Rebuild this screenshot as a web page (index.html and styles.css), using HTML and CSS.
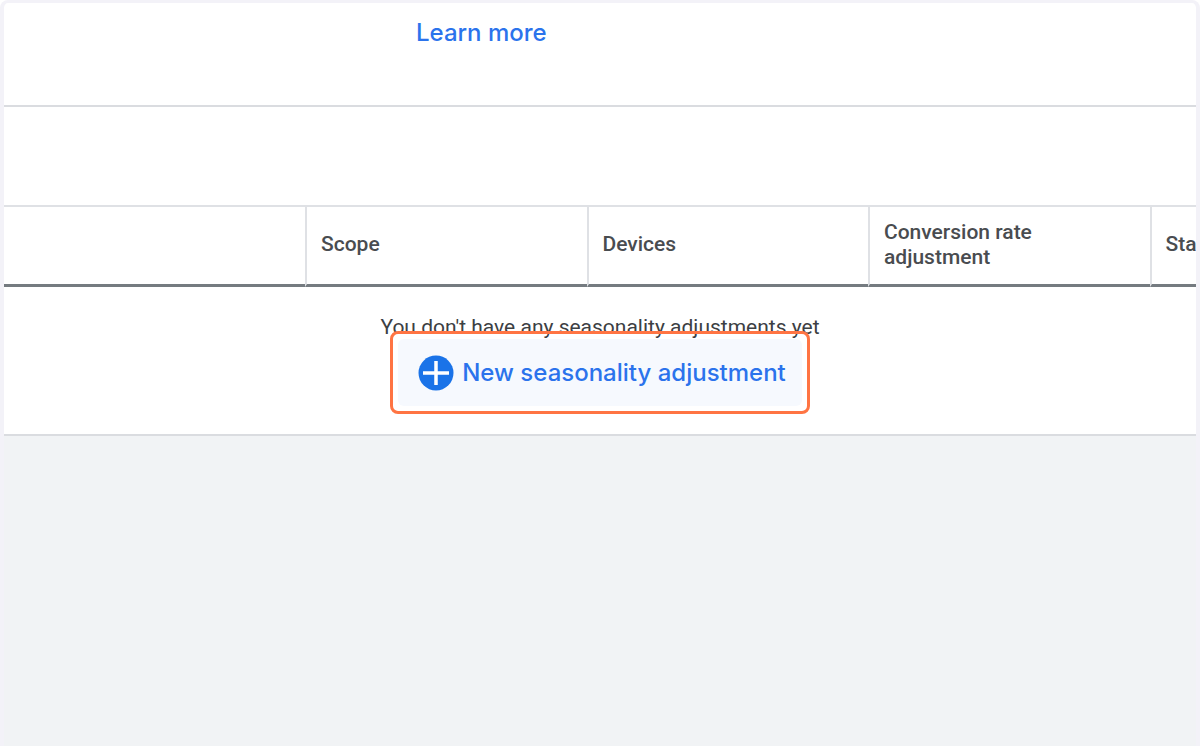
FILE: index.html
```
<!DOCTYPE html>
<html lang="en">
<head>
<meta charset="utf-8">
<meta name="viewport" content="width=device-width, initial-scale=1">
<title>Seasonality adjustments</title>
<link rel="stylesheet" href="styles.css">
</head>
<body>
<main class="frame">
  <header class="intro"><a class="learn-link" href="#">Learn more</a></header>
  <div class="toolbar"></div>
  <table class="grid">
    <thead>
      <tr>
        <td class="lead"></td>
        <th scope="col">Scope</th>
        <th scope="col">Devices</th>
        <th scope="col">Conversion rate adjustment</th>
        <th scope="col">Sta</th>
      </tr>
    </thead>
  </table>
  <section class="empty">
    <p class="empty-text">You don't have any seasonality adjustments yet</p>
    <div class="highlight">
      <button class="new-button" type="button">
        <svg class="plus" viewBox="0 0 36 36" aria-hidden="true"><circle cx="18" cy="18" r="17.5" fill="#1a73e8"/><path d="M18 6v24M5 18h26" stroke="#fff" stroke-width="3.5"/></svg>
        <span>New seasonality adjustment</span>
      </button>
    </div>
  </section>
</main>
</body>
</html>
```
FILE: styles.css
```
* {
  box-sizing: border-box;
}

body {
  margin: 0;
  background: #fff;
  font-family: Roboto, "Liberation Sans", sans-serif;
  color: #3c4043;
}

.frame {
  min-height: 100vh;
  border: 4px solid #f3f2f8;
  border-top-width: 3px;
  border-bottom: 0;
  border-radius: 8px 8px 0 0;
  background: #f1f3f5;
  overflow: hidden;
}

.intro {
  height: 104px;
  padding: 14px 0 0 412px;
  border-bottom: 2px solid #dadce0;
  background: #fff;
}

.learn-link {
  font: 500 24px/32px Inter, "Liberation Sans", sans-serif;
  color: #2b73ec;
  text-decoration: none;
}

.toolbar {
  height: 100px;
  border-bottom: 2px solid #dfe1e5;
  background: #fff;
}

.grid {
  width: 1427px;
  table-layout: fixed;
  border-collapse: separate;
  border-spacing: 0;
  background: #fff;
}

.grid th,
.grid td {
  height: 80px;
  padding: 0 14px 2px;
  border-bottom: 3px solid #757b80;
  vertical-align: middle;
}

.grid th {
  padding-right: 90px;
  border-left: 2px solid #dfe1e5;
  font-size: 21px;
  line-height: 25px;
  font-weight: 500;
  color: #494c50;
  text-align: left;
}

.grid .lead {
  width: 301px;
}

.empty {
  display: flex;
  flex-direction: column;
  align-items: center;
  padding: 28px 0 20px;
  border-bottom: 2px solid #dadce0;
  background: #fff;
}

.empty-text {
  margin: 0;
  font-size: 21px;
  line-height: 24px;
}

.highlight {
  margin-top: -8px;
  padding: 5px;
  border: 3px solid #ff7443;
  border-radius: 8px;
}

.new-button {
  display: flex;
  align-items: center;
  gap: 8px;
  height: 67px;
  padding: 1px 16px 0 20px;
  border: 0;
  border-radius: 6px;
  background: #f6f9fe;
  font: 500 24px/32px Inter, "Liberation Sans", sans-serif;
  color: #2b73ec;
  white-space: nowrap;
}

.plus {
  width: 36px;
  height: 36px;
}
```
